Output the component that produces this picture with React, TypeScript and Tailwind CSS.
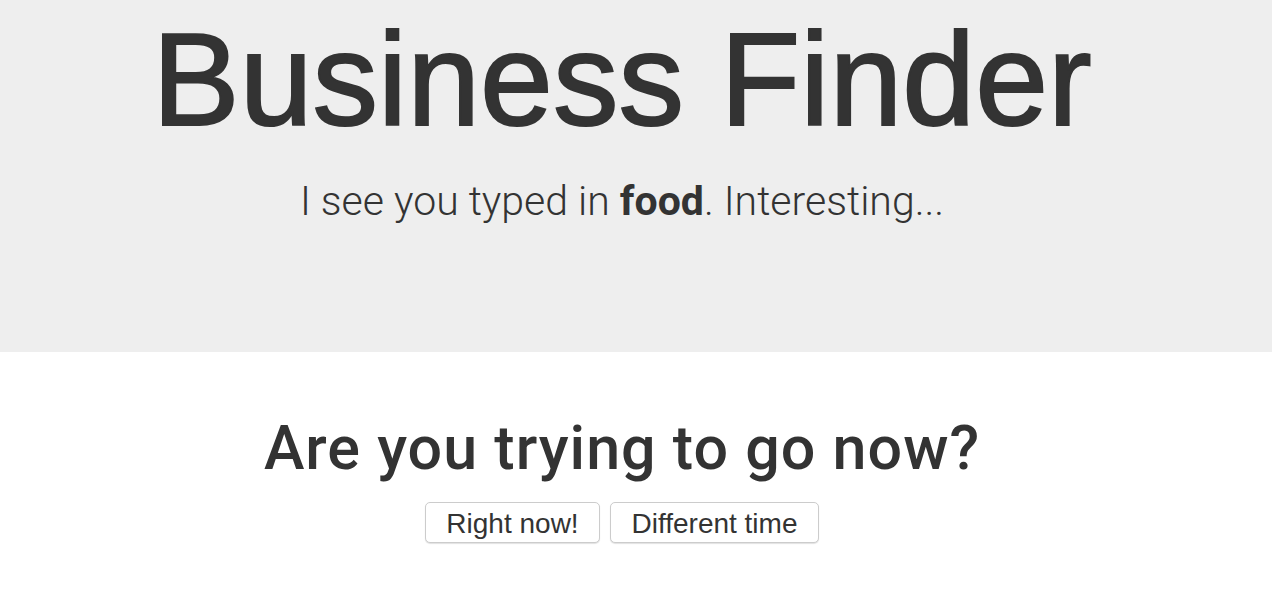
export default function App() {
  return (
    <div className="min-h-screen bg-white text-[#333]" style={{ fontFamily: '"Liberation Sans", Arial, sans-serif' }}>
      {/* jumbotron */}
      <section className="h-[352px] bg-[#eee] pr-[28px]">
        <div className="flex flex-col items-center">
          <h1 className="mt-[10px] text-[131px] leading-[140px] [-webkit-text-stroke:2px_#333]">Business Finder</h1>
          <p className="mt-[26px] text-[41px] leading-[50px] font-light" style={{ fontFamily: 'Roboto, "Liberation Sans", sans-serif' }}>
            I see you typed in <strong className="font-bold">food</strong>. Interesting...
          </p>
        </div>
      </section>

      {/* question */}
      <section className="flex flex-col items-center pr-[28px] pt-[60px]">
        <h2 className="text-[61px] leading-[72px] font-medium tracking-[1px]" style={{ fontFamily: 'Roboto, "Liberation Sans", sans-serif' }}>
          Are you trying to go now?
        </h2>
        <div className="mt-[18px] flex gap-[10px]">
          <button className="h-[41px] w-[175px] rounded-[5px] border border-[#ccc] bg-white text-[28px] shadow-[0_1px_1px_rgba(0,0,0,0.12)]">
            Right now!
          </button>
          <button className="h-[41px] w-[209px] rounded-[5px] border border-[#ccc] bg-white text-[28px] shadow-[0_1px_1px_rgba(0,0,0,0.12)]">
            Different time
          </button>
        </div>
      </section>
    </div>
  );
}
